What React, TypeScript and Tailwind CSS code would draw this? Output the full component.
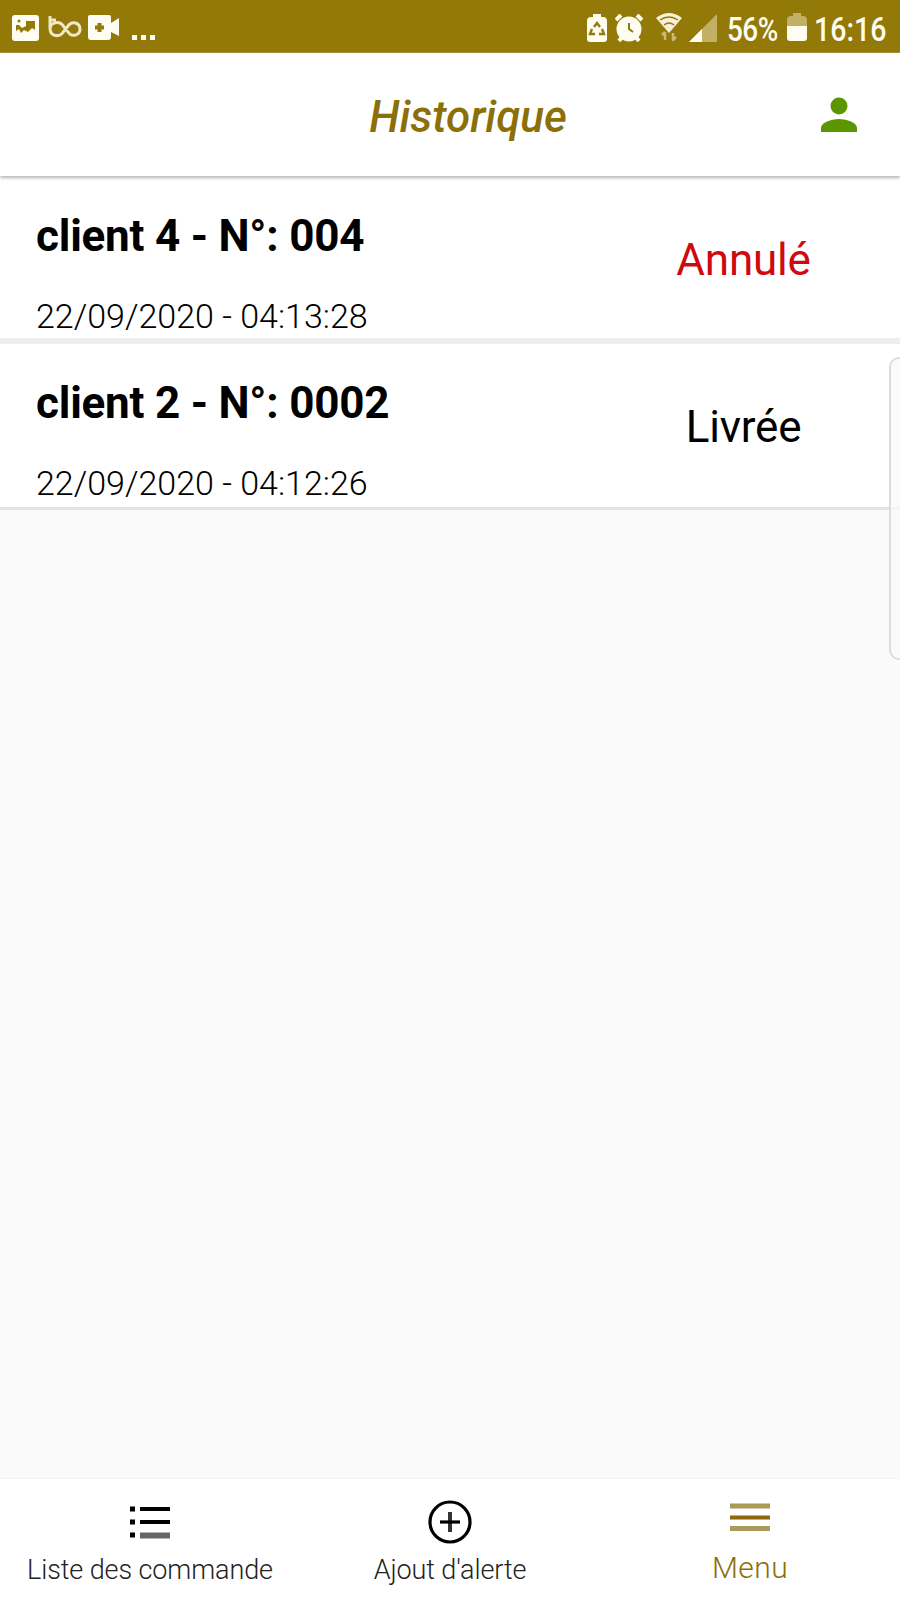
interface Order {
  client: string;
  date: string;
  status: string;
  statusClass: string;
  rowClass: string;
}

const ORDERS: Order[] = [
  {
    client: 'client 4 - N°: 004',
    date: '22/09/2020 - 04:13:28',
    status: 'Annulé',
    statusClass: 'pt-[58px] text-[#cc0a0f]',
    rowClass: 'h-[168px] border-b-[6px] border-[#eeeeee] pt-[34px]',
  },
  {
    client: 'client 2 - N°: 0002',
    date: '22/09/2020 - 04:12:26',
    status: 'Livrée',
    statusClass: 'text-black',
    rowClass: 'h-[166px] border-b-[3px] border-[#e2e2e2] pt-[33px]',
  },
];

function StatusBar() {
  return (
    <div className="flex h-[53px] shrink-0 items-center justify-between border-b border-[#a38d3d] bg-[#937907] text-[#fffdf2]">
      <div className="flex h-full items-center pl-[12px]">
        <svg width="27" height="27" viewBox="0 0 27 27" className="mt-[4px]">
          <rect width="27" height="26" rx="3" fill="#fffdf2" />
          <path d="M4 16v-6h3l3 3 4-2V6h9v9l-3-2-4 4-4-2-3 3-2-4z" fill="#937907" />
          <circle cx="7" cy="6" r="1.5" fill="#937907" />
        </svg>
        <svg width="34" height="24" viewBox="0 0 34 24" className="ml-[9px] mt-[2px]" fill="none" stroke="#eee7c8" strokeWidth="3">
          <path d="M2 1v12c0 9 10 10 14 3l4-5c4-6 12-3 12 3s-8 9-12 3l-4-5C12 5 2 7 2 14M2 5h6" />
        </svg>
        <svg width="32" height="25" viewBox="0 0 32 25" className="ml-[6px] mt-[2px]">
          <path d="M2 0h19q2 0 2 2v6l8-5v18l-8-4v5q0 3-3 3H3q-3 0-3-3V2q0-2 2-2z" fill="#fffdf2" />
          <path d="M11.5 8v9M7 12.5h9" stroke="#937907" strokeWidth="4" />
        </svg>
        <div className="ml-[12px] mt-[23px] flex gap-[4px]">
          <i className="size-[5px] bg-[#fffdf2]" />
          <i className="size-[5px] bg-[#fffdf2]" />
          <i className="size-[5px] bg-[#fffdf2]" />
        </div>
      </div>
      <div className="flex h-full items-center pr-[13px]">
        <svg width="20" height="28" viewBox="0 0 20 28" className="mt-[3px]">
          <path d="M4 3h2V0h8v3h2q4 0 4 4v18q0 3-3 3H3q-3 0-3-3V7q0-4 4-4z" fill="#fffdf2" />
          <path d="M7 13l3-4 3 4M5 15l-2 5h5M15 15l2 5h-5" fill="none" stroke="#937907" strokeWidth="2.4" />
        </svg>
        <svg width="28" height="28" viewBox="0 0 28 28" className="ml-[8px] mt-[3px]">
          <path d="M1 6l5-5M22 1l5 5M4 27l4-5M24 27l-4-5" stroke="#fffdf2" strokeWidth="4" />
          <circle cx="14" cy="15" r="12.5" fill="#fffdf2" />
          <path d="M14 9v6l4 3" fill="none" stroke="#937907" strokeWidth="2" />
        </svg>
        <svg width="26" height="29" viewBox="0 0 26 29" className="ml-[13px] mt-[2px]">
          <path d="M0 5Q13-5 26 5L13 20z" fill="#f6f0d8" />
          <path d="M4 7q9-6 18 0M8 12q5-4 10 0" fill="none" stroke="#937907" strokeWidth="1.5" />
          <path d="M9 19v8M6 22l3-3M17 28v-8M20 24l-3 3" fill="none" stroke="#c8b976" strokeWidth="2.5" />
        </svg>
        <svg width="28" height="28" viewBox="0 0 28 28" className="ml-[7px] mt-[3px]">
          <path d="M0 28L28 0v28z" fill="#c2b164" />
          <path d="M0 28l13-13v13z" fill="#fffdf2" />
        </svg>
        <span className="ml-[10px] mt-[5px] w-[54px] origin-left scale-x-[0.82] text-[34px] font-medium leading-none tracking-[-0.6px]">56%</span>
        <svg width="20" height="28" viewBox="0 0 20 28" className="ml-[6px] mt-[1px]">
          <path d="M4 3h2V0h8v3h2q4 0 4 4v6H0V7q0-4 4-4z" fill="#c2b164" />
          <path d="M0 13h20v12q0 3-3 3H3q-3 0-3-3z" fill="#fffdf2" />
        </svg>
        <span className="ml-[7px] mt-[5px] w-[73px] origin-left scale-x-[0.84] text-[34px] font-medium leading-none">16:16</span>
      </div>
    </div>
  );
}

function OrderRow({ order }: { order: Order }) {
  return (
    <div className={`flex shrink-0 bg-white pl-[36px] ${order.rowClass}`}>
      <div className="flex-1 whitespace-nowrap text-black">
        <div className="text-[44px] font-bold leading-[52px] tracking-[-0.22px]">{order.client}</div>
        <div className="mt-[34px] h-[30px] text-[34px] font-light leading-[40px]">{order.date}</div>
      </div>
      <div className={`w-[313px] !pt-[24px] text-center text-[44px] leading-[52px] tracking-[-0.2px] ${order.statusClass}`}>
        {order.status}
      </div>
    </div>
  );
}

function BottomNav() {
  return (
    <nav className="grid h-[122px] shrink-0 grid-cols-3 border-t border-[#f4f4f4] bg-white text-center text-[#222]">
      <div className="flex flex-col items-center">
        <svg width="42" height="34" viewBox="0 0 42 34" className="mt-[26px]">
          <path d="M11 4h30M11 17h30" stroke="#000" strokeWidth="4" />
          <path d="M11 30.5h30" stroke="#666" strokeWidth="6" />
          <path d="M1 4h5M1 17h5M1 30h5" stroke="#000" strokeWidth="5" />
        </svg>
        <span className="mt-[14px] text-[27px] font-light leading-[34px] tracking-[-0.1px]">Liste des commande</span>
      </div>
      <div className="flex flex-col items-center">
        <svg width="44" height="44" viewBox="0 0 44 44" className="mt-[21px]" fill="none" stroke="#000">
          <circle cx="22" cy="22" r="20" strokeWidth="3.2" />
          <path d="M22 12v20" stroke="#333" strokeWidth="4" />
          <path d="M12 22h20" strokeWidth="3.2" />
        </svg>
        <span className="mt-[9px] text-[27px] font-light leading-[34px] tracking-[-0.1px]">Ajout d'alerte</span>
      </div>
      <div className="flex flex-col items-center text-[#8b6f08]">
        <svg width="40" height="30" viewBox="0 0 40 30" className="mt-[24px]">
          <path d="M0 3h40M0 25.5h40" stroke="#ab9959" strokeWidth="5" />
          <path d="M0 14.5h40" stroke="#8b6808" strokeWidth="4" />
        </svg>
        <span className="mt-[18px] text-[30px] font-light leading-[34px] tracking-[0.4px]">Menu</span>
      </div>
    </nav>
  );
}

export default function App() {
  return (
    <div className="relative flex h-[1600px] w-[900px] flex-col overflow-hidden bg-[#fafafa] font-['Roboto',sans-serif]">
      <StatusBar />
      <header className="z-10 grid h-[123px] shrink-0 grid-cols-[1fr_auto_1fr] items-center bg-white shadow-[0_2px_3px_#b8b8b8]">
        <h1 className="col-start-2 ml-[36px] mt-[5px] text-[44px] font-medium italic leading-[52px] text-[#8b6f08]">Historique</h1>
        <svg width="36" height="35" viewBox="0 0 36 35" className="mr-[43px] justify-self-end" fill="#5b9600">
          <circle cx="18" cy="9" r="8.5" />
          <path d="M0 35v-4c0-6 12-9 18-9s18 3 18 9v4z" />
        </svg>
      </header>
      {ORDERS.map((order) => (
        <OrderRow key={order.client} order={order} />
      ))}
      <main className="flex-1" />
      <BottomNav />
      {/* edge panel handle */}
      <div className="absolute right-[-12px] top-[357px] h-[303px] w-[23px] rounded-[10px] border-2 border-[#dddddd] bg-[#fafafa]/80" />
    </div>
  );
}
